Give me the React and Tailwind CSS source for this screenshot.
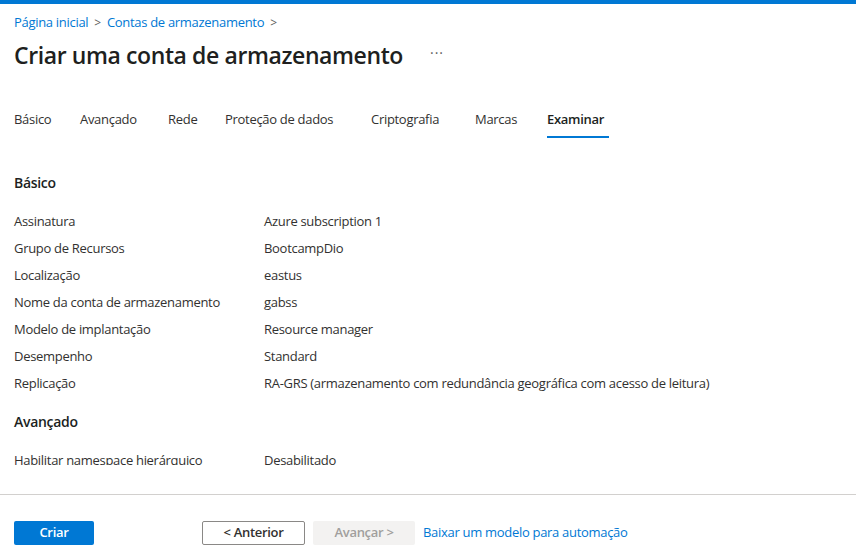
import React from 'react';

const tabs = [
  ['Básico', 'w-[66px]'],
  ['Avançado', 'w-[88px]'],
  ['Rede', 'w-[57px]'],
  ['Proteção de dados', 'w-[146px]'],
  ['Criptografia', 'w-[104px]'],
  ['Marcas', 'w-[72px]'],
  ['Examinar', 'w-[62px]'],
];

const basicRows = [
  ['Assinatura', 'Azure subscription 1'],
  ['Grupo de Recursos', 'BootcampDio'],
  ['Localização', 'eastus'],
  ['Nome da conta de armazenamento', 'gabss'],
  ['Modelo de implantação', 'Resource manager'],
  ['Desempenho', 'Standard'],
  ['Replicação', 'RA-GRS (armazenamento com redundância geográfica com acesso de leitura)'],
];

const Row = ({ label, value }) => (
  <div className="flex h-[27px] items-center">
    <div className="w-[250px] shrink-0">{label}</div>
    <div>{value}</div>
  </div>
);

const App = () => {
  return (
    <div
      className="h-[557px] w-[856px] bg-white flex flex-col text-[#323130] text-[13px] tracking-[-0.3px] overflow-hidden"
      style={{ fontFamily: '"Segoe UI", "Open Sans", "Liberation Sans", sans-serif' }}
    >
      {/* Top bar */}
      <div className="h-[4px] bg-[#0078d4] shrink-0"></div>

      {/* Breadcrumb */}
      <div className="flex items-center gap-[6px] px-[14px] mt-[10px] h-[18px] text-[#0078d4] text-[13px]">
        <span>Página inicial</span>
        <span className="text-[#605e5c] text-[12px]">&gt;</span>
        <span>Contas de armazenamento</span>
        <span className="text-[#605e5c] text-[12px]">&gt;</span>
      </div>

      {/* Title */}
      <div className="flex items-center px-[14px] mt-[7px] h-[32px]">
        <h1 className="text-[23px] font-semibold text-[#201f1e] tracking-[-0.4px]">Criar uma conta de armazenamento</h1>
        <span className="ml-[27px] text-[#605e5c] text-[14px] tracking-[1px] -mt-[6px]">···</span>
      </div>

      {/* Tabs */}
      <div className="flex px-[14px] mt-[29px] h-[40px] shrink-0">
        {tabs.map(([t, w]) => (
          <div key={t} className={`${w} shrink-0 relative flex items-center h-full`}>
            <span className={t === 'Examinar' ? 'font-semibold text-[#201f1e]' : ''}>{t}</span>
            {t === 'Examinar' && (
              <div className="absolute left-0 right-0 bottom-[2px] h-[2px] bg-[#0078d4]"></div>
            )}
          </div>
        ))}
      </div>

      {/* Scroll content */}
      <div className="h-[325px] overflow-hidden px-[14px] shrink-0">
        <h2 className="text-[14px] font-semibold text-[#201f1e] mt-[33px] h-[20px] leading-[20px]">Básico</h2>
        <div className="mt-[15px]">
          {basicRows.map(([l, v]) => (
            <Row key={l} label={l} value={v} />
          ))}
        </div>
        <h2 className="text-[14px] font-semibold text-[#201f1e] mt-[15px] h-[20px] leading-[20px]">Avançado</h2>
        <div className="mt-[15px]">
          <Row label="Habilitar namespace hierárquico" value="Desabilitado" />
          <Row label="Habilitar SFTP" value="Desabilitado" />
        </div>
      </div>

      {/* Separator */}
      <div className="mt-[29px] h-px bg-[#d2d0ce] shrink-0"></div>

      {/* Footer */}
      <div className="flex items-center px-[14px] mt-[26px]">
        <button className="w-[80px] h-[24px] bg-[#0078d4] text-white font-semibold rounded-[2px]">Criar</button>
        <button className="ml-[108px] w-[103px] h-[24px] border border-[#8a8886] rounded-[2px] text-[#323130] font-semibold">
          &lt; Anterior
        </button>
        <button className="ml-[8px] w-[102px] h-[24px] bg-[#f3f2f1] text-[#a19f9d] font-semibold rounded-[2px]">
          Avançar &gt;
        </button>
        <a className="ml-[8px] text-[#0078d4]">Baixar um modelo para automação</a>
      </div>
    </div>
  );
};

export default App;
